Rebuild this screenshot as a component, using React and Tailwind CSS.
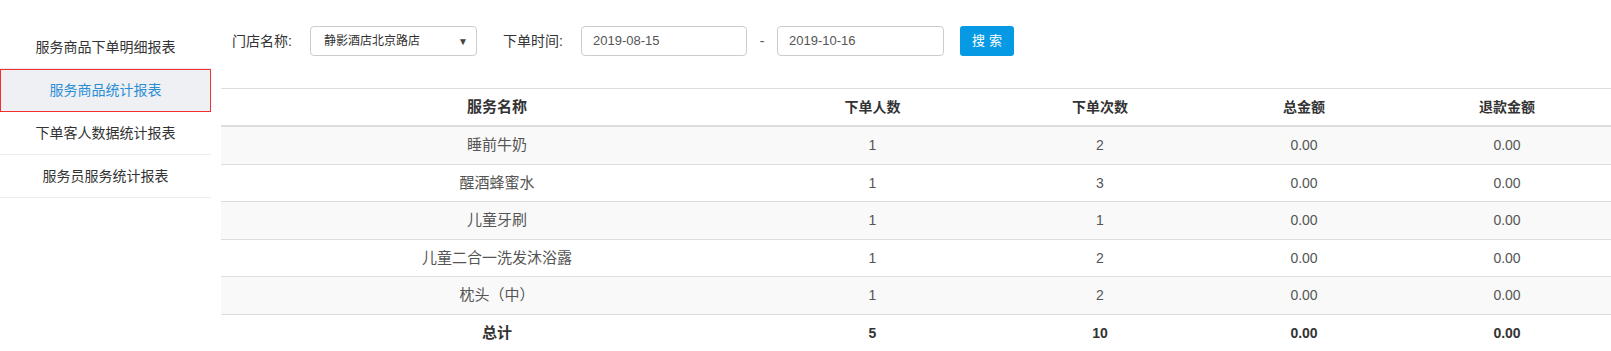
const menu = [
  "服务商品下单明细报表",
  "服务商品统计报表",
  "下单客人数据统计报表",
  "服务员服务统计报表",
];

const rows = [
  { name: "睡前牛奶", people: 1, times: 2, total: "0.00", refund: "0.00" },
  { name: "醒酒蜂蜜水", people: 1, times: 3, total: "0.00", refund: "0.00" },
  { name: "儿童牙刷", people: 1, times: 1, total: "0.00", refund: "0.00" },
  { name: "儿童二合一洗发沐浴露", people: 1, times: 2, total: "0.00", refund: "0.00" },
  { name: "枕头（中）", people: 1, times: 2, total: "0.00", refund: "0.00" },
];

export default function App() {
  return (
    <div className="flex w-[1611px] h-[351px] overflow-hidden bg-white text-[#333] font-['Liberation_Sans','Noto_Sans_CJK_SC',sans-serif]">
      {/* Sidebar */}
      <aside className="w-[211px] shrink-0 pt-[26px]">
        {menu.map((item, i) =>
          i === 1 ? (
            <div
              key={item}
              className="h-[43px] flex items-center justify-center border border-[#f23030] bg-[#eef0f4] text-[14px] text-[#2b8dd4]"
            >
              {item}
            </div>
          ) : (
            <div
              key={item}
              className="h-[43px] flex items-center justify-center border-b border-[#ececec] text-[14px] text-[#333]"
            >
              {item}
            </div>
          )
        )}
      </aside>

      {/* Content */}
      <main className="flex-1 min-w-0 pl-[10px] overflow-hidden">
        <div className="flex items-center h-[30px] mt-[26px] pl-[11px] text-[14px] text-[#333]">
          <span className="w-[78px]">门店名称:</span>
          <div className="w-[167px] h-[30px] flex items-center justify-between border border-[#ccc] rounded-[4px] pl-[13px] pr-[8px]">
            <span className="text-[12px] text-[#333]">静影酒店北京路店</span>
            <span className="text-[10px] text-[#444]">▼</span>
          </div>
          <span className="w-[78px] ml-[26px]">下单时间:</span>
          <div className="w-[166px] h-[30px] flex items-center border border-[#ccc] rounded-[4px] pl-[11px] text-[13px] text-[#555]">
            2019-08-15
          </div>
          <span className="w-[30px] text-center text-[#555]">-</span>
          <div className="w-[167px] h-[30px] flex items-center border border-[#ccc] rounded-[4px] pl-[11px] text-[13px] text-[#555]">
            2019-10-16
          </div>
          <button className="ml-[16px] w-[54px] h-[30px] rounded-[3px] bg-[#079ae4] text-white text-[13px] tracking-[4px] pl-[4px]">
            搜索
          </button>
        </div>

        <table className="mt-[32px] table-fixed w-[1413px] border-collapse text-center">
          <colgroup>
            <col className="w-[552px]" />
            <col className="w-[199px]" />
            <col className="w-[256px]" />
            <col className="w-[152px]" />
            <col className="w-[254px]" />
          </colgroup>
          <thead>
            <tr className="font-bold text-[14px] text-[#333]">
              <th className="border-t border-b-2 border-[#ddd] py-2 leading-5 text-[15px]">服务名称</th>
              <th className="border-t border-b-2 border-[#ddd] py-2 leading-5">下单人数</th>
              <th className="border-t border-b-2 border-[#ddd] py-2 leading-5">下单次数</th>
              <th className="border-t border-b-2 border-[#ddd] py-2 leading-5">总金额</th>
              <th className="border-t border-b-2 border-[#ddd] py-2 leading-5">退款金额</th>
            </tr>
          </thead>
          <tbody className="text-[14px] text-[#555]">
            {rows.map((r, i) => (
              <tr key={r.name} className={i % 2 === 0 ? "bg-[#f9f9f9]" : "bg-white"}>
                <td className="border-t border-[#ddd] py-2 leading-[20.5px] text-[15px]">{r.name}</td>
                <td className="border-t border-[#ddd] py-2 leading-[20.5px]">{r.people}</td>
                <td className="border-t border-[#ddd] py-2 leading-[20.5px]">{r.times}</td>
                <td className="border-t border-[#ddd] py-2 leading-[20.5px]">{r.total}</td>
                <td className="border-t border-[#ddd] py-2 leading-[20.5px]">{r.refund}</td>
              </tr>
            ))}
            <tr className="font-bold text-[#333]">
              <td className="border-t border-[#ddd] py-2 leading-[20.5px] text-[15px]">总计</td>
              <td className="border-t border-[#ddd] py-2 leading-[20.5px]">5</td>
              <td className="border-t border-[#ddd] py-2 leading-[20.5px]">10</td>
              <td className="border-t border-[#ddd] py-2 leading-[20.5px]">0.00</td>
              <td className="border-t border-[#ddd] py-2 leading-[20.5px]">0.00</td>
            </tr>
          </tbody>
        </table>
      </main>
    </div>
  );
}
